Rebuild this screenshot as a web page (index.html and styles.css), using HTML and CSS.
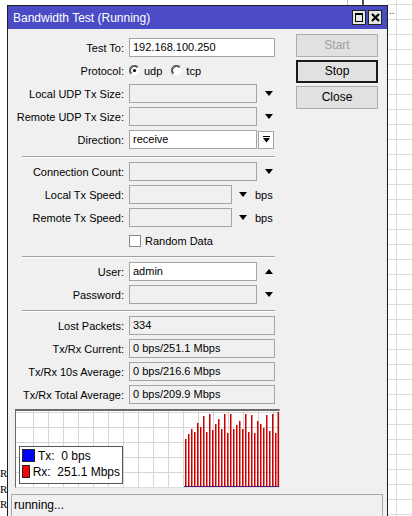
FILE: index.html
```html
<!DOCTYPE html>
<html>

<head>
    <title>Bandwidth Test</title>
    <link rel="stylesheet" href="styles.css">
</head>

<body>
    <div class="desk">
        <div class="desk-left">R<br>R<br>R</div>

        <div class="win-col">
            <div class="desk-top"><span class="desk-scroll"></span></div>

            <div class="window">
                <div class="title-bar">
                    <span class="title">Bandwidth Test (Running)</span>
                    <span class="tb-btn"><span class="max-icon"></span></span>
                    <span class="tb-btn">
                        <svg width="9" height="9" viewBox="0 0 9 9">
                            <path d="M1 1 L8 8 M8 1 L1 8" stroke="#000" stroke-width="2.2" />
                        </svg>
                    </span>
                </div>

                <div class="main">
                    <div class="form">
                        <div class="row">
                            <label>Test To:</label>
                            <div class="value"><span class="field wide">192.168.100.250</span></div>
                        </div>
                        <div class="row">
                            <label>Protocol:</label>
                            <div class="value">
                                <span class="radio">
                                    <svg width="11" height="11" viewBox="0 0 11 11">
                                        <circle cx="5.5" cy="5.5" r="5" fill="#fff" />
                                        <path d="M1.9 9.1 A5 5 0 0 1 9.1 1.9" fill="none" stroke="#6a6a6a" stroke-width="1.2" />
                                        <path d="M2.6 8.4 A4 4 0 0 1 8.4 2.6" fill="none" stroke="#222" stroke-width="1" />
                                        <circle cx="5.5" cy="5.5" r="1.6" fill="#000" />
                                    </svg>
                                    udp
                                </span>
                                <span class="radio">
                                    <svg width="11" height="11" viewBox="0 0 11 11">
                                        <circle cx="5.5" cy="5.5" r="5" fill="#fff" />
                                        <path d="M1.9 9.1 A5 5 0 0 1 9.1 1.9" fill="none" stroke="#6a6a6a" stroke-width="1.2" />
                                        <path d="M2.6 8.4 A4 4 0 0 1 8.4 2.6" fill="none" stroke="#222" stroke-width="1" />
                                    </svg>
                                    tcp
                                </span>
                            </div>
                        </div>
                        <div class="row">
                            <label>Local UDP Tx Size:</label>
                            <div class="value"><span class="field short gray"></span><span class="arrow-down"></span></div>
                        </div>
                        <div class="row">
                            <label>Remote UDP Tx Size:</label>
                            <div class="value"><span class="field short gray"></span><span class="arrow-down"></span></div>
                        </div>
                        <div class="row">
                            <label>Direction:</label>
                            <div class="value">
                                <span class="field short">receive</span>
                                <span class="dd-btn">
                                    <svg width="7" height="7" viewBox="0 0 7 7">
                                        <path d="M0 0.5 H7" stroke="#000" stroke-width="1" />
                                        <path d="M0 2 H7 L3.5 6.5 Z" fill="#000" />
                                    </svg>
                                </span>
                            </div>
                        </div>

                        <div class="sep first"></div>

                        <div class="row">
                            <label>Connection Count:</label>
                            <div class="value"><span class="field short gray"></span><span class="arrow-down"></span></div>
                        </div>
                        <div class="row">
                            <label>Local Tx Speed:</label>
                            <div class="value"><span class="field speed gray"></span><span class="arrow-down near"></span><span class="unit">bps</span></div>
                        </div>
                        <div class="row">
                            <label>Remote Tx Speed:</label>
                            <div class="value"><span class="field speed gray"></span><span class="arrow-down near"></span><span class="unit">bps</span></div>
                        </div>
                        <div class="row">
                            <label></label>
                            <div class="value"><span class="check"></span>Random Data</div>
                        </div>

                        <div class="sep"></div>

                        <div class="row">
                            <label>User:</label>
                            <div class="value"><span class="field short">admin</span><span class="arrow-up"></span></div>
                        </div>
                        <div class="row">
                            <label>Password:</label>
                            <div class="value"><span class="field short gray"></span><span class="arrow-down"></span></div>
                        </div>

                        <div class="sep"></div>

                        <div class="row">
                            <label>Lost Packets:</label>
                            <div class="value"><span class="field wide gray">334</span></div>
                        </div>
                        <div class="row">
                            <label>Tx/Rx Current:</label>
                            <div class="value"><span class="field wide gray">0 bps/251.1 Mbps</span></div>
                        </div>
                        <div class="row">
                            <label>Tx/Rx 10s Average:</label>
                            <div class="value"><span class="field wide gray">0 bps/216.6 Mbps</span></div>
                        </div>
                        <div class="row">
                            <label>Tx/Rx Total Average:</label>
                            <div class="value"><span class="field wide gray">0 bps/209.9 Mbps</span></div>
                        </div>
                    </div>

                    <div class="buttons">
                        <div class="btn disabled">Start</div>
                        <div class="btn default">Stop</div>
                        <div class="btn">Close</div>
                    </div>
                </div>

                <!-- traffic graph: grid, rx bars, tx baseline -->
                <div class="graph">
                    <svg width="263" height="76" viewBox="0 0 263 76">
                        <g stroke="#d6d6d6" stroke-width="1">
                            <path d="M17.5 0 V76 M32.5 0 V76 M47.5 0 V76 M62.5 0 V76 M77.5 0 V76 M92.5 0 V76 M107.5 0 V76 M122.5 0 V76 M137.5 0 V76 M152.5 0 V76 M167.5 0 V76 M182.5 0 V76 M197.5 0 V76 M212.5 0 V76 M227.5 0 V76 M242.5 0 V76 M257.5 0 V76" />
                            <path d="M0 1.5 H263 M0 16.5 H263 M0 31.5 H263 M0 46.5 H263 M0 61.5 H263" />
                        </g>
                        <g fill="#cc0000">
                            <rect x="169" y="28" width="1.5" height="48" />
                            <rect x="172" y="23" width="1.5" height="53" />
                            <rect x="175" y="18" width="1.5" height="58" />
                            <rect x="178" y="21" width="1.5" height="55" />
                            <rect x="181" y="12" width="1.5" height="64" />
                            <rect x="184" y="16" width="1.5" height="60" />
                            <rect x="187" y="5" width="1.5" height="71" />
                            <rect x="190" y="21" width="1.5" height="55" />
                            <rect x="193" y="3" width="1.5" height="73" />
                            <rect x="196" y="19" width="1.5" height="57" />
                            <rect x="199" y="13" width="1.5" height="63" />
                            <rect x="202" y="8" width="1.5" height="68" />
                            <rect x="205" y="18" width="1.5" height="58" />
                            <rect x="208" y="3" width="1.5" height="73" />
                            <rect x="211" y="22" width="1.5" height="54" />
                            <rect x="214" y="3" width="1.5" height="73" />
                            <rect x="217" y="18" width="1.5" height="58" />
                            <rect x="220" y="14" width="1.5" height="62" />
                            <rect x="223" y="10" width="1.5" height="66" />
                            <rect x="226" y="18" width="1.5" height="58" />
                            <rect x="229" y="3" width="1.5" height="73" />
                            <rect x="232" y="21" width="1.5" height="55" />
                            <rect x="235" y="4" width="1.5" height="72" />
                            <rect x="238" y="22" width="1.5" height="54" />
                            <rect x="241" y="10" width="1.5" height="66" />
                            <rect x="244" y="13" width="1.5" height="63" />
                            <rect x="247" y="17" width="1.5" height="59" />
                            <rect x="250" y="4" width="1.5" height="72" />
                            <rect x="253" y="20" width="1.5" height="56" />
                            <rect x="256" y="3" width="1.5" height="73" />
                            <rect x="259" y="22" width="1.5" height="54" />
                            <rect x="261.5" y="1" width="1.5" height="75" />
                        </g>
                        <path d="M168 75.5 H263" stroke="#5a1070" stroke-width="1" />
                    </svg>
                    <div class="legend">
                        <div class="legend-row"><span class="swatch tx"></span>Tx:  0 bps</div>
                        <div class="legend-row"><span class="swatch rx"></span>Rx:  251.1 Mbps</div>
                    </div>
                </div>

                <div class="status">running...</div>
            </div>
        </div>

        <div class="desk-right"><span class="dots">..</span></div>
    </div>
</body>

</html>
```

FILE: styles.css
```css
body {
    margin: 0;
    font-family: "Liberation Sans", Arial, sans-serif;
    font-size: 11px;
    color: #000;
    background-color: #fff;
    overflow: hidden;
}

/* desktop behind the window */
.desk {
    display: flex;
    height: 516px;
    overflow: hidden;
}

.desk-left {
    width: 7px;
    flex: none;
    padding-top: 466px;
    font-family: "Liberation Serif", serif;
    font-size: 11px;
    line-height: 15.5px;
}

.win-col {
    width: 381px;
    flex: none;
}

.desk-top {
    height: 5px;
    position: relative;
}

.desk-scroll {
    position: absolute;
    left: 340px;
    top: 0;
    width: 14px;
    height: 5px;
    border-left: 1px solid #c0c0c0;
    border-right: 2px solid #555;
}

.desk-right {
    flex: 1;
    background-image:
        linear-gradient(to right, transparent 8px, #dcdcdc 8px, #dcdcdc 9px, transparent 9px),
        repeating-linear-gradient(to bottom, transparent 0, transparent 4px, #dcdcdc 4px, #dcdcdc 5px, transparent 5px, transparent 15px);
}

.dots {
    display: block;
    margin: 6px 0 0 1px;
    font-size: 10px;
    line-height: 10px;
    color: #333;
}

/* window frame */
.window {
    border: 1px solid #1e1e1e;
    border-bottom: none;
    background-color: #f0f0f0;
    height: 600px;
}

.title-bar {
    height: 23px;
    background-color: #4b4bc6;
    display: flex;
    align-items: center;
    padding: 0 5px;
    color: #fff;
}

.title {
    flex: 1;
    font-size: 12px;
}

.tb-btn {
    width: 12px;
    height: 13px;
    border: 1px solid #222;
    background-color: #e6e6e6;
    margin-left: 2px;
    display: flex;
    align-items: center;
    justify-content: center;
}

.max-icon {
    width: 6px;
    height: 6px;
    border: 1px solid #000;
    border-top-width: 2px;
}

/* form + buttons */
.main {
    display: flex;
}

.form {
    width: 272px;
    padding-top: 9px;
    display: flex;
    flex-direction: column;
    gap: 4px;
}

.row {
    display: grid;
    grid-template-columns: 116px auto;
    column-gap: 5px;
    align-items: center;
    height: 19px;
}

.row label {
    text-align: right;
    white-space: nowrap;
}

.value {
    display: flex;
    align-items: center;
    height: 19px;
}

.field {
    box-sizing: border-box;
    height: 19px;
    border: 1px solid #a5a5a5;
    background-color: #fff;
    padding: 0 3px;
    line-height: 17px;
}

.field.gray {
    background-color: #f0f0f0;
}

.field.wide {
    width: 146px;
}

.field.short {
    width: 128px;
}

.field.speed {
    width: 103px;
}

.arrow-down,
.arrow-up {
    width: 0;
    height: 0;
    margin-left: 8px;
    border-left: 4px solid transparent;
    border-right: 4px solid transparent;
}

.arrow-down {
    border-top: 5px solid #000;
}

.arrow-up {
    border-bottom: 5px solid #000;
}

.arrow-down.near {
    margin-left: 7px;
}

.unit {
    margin-left: 8px;
}

.dd-btn {
    box-sizing: border-box;
    width: 16px;
    height: 18px;
    margin-left: 1px;
    border: 1px solid #a5a5a5;
    background-color: #fff;
    display: flex;
    align-items: center;
    justify-content: center;
}

.radio {
    display: inline-flex;
    align-items: center;
    gap: 4px;
    margin-right: 9px;
}

.check {
    box-sizing: border-box;
    width: 12px;
    height: 12px;
    border: 1px solid #8a8a8a;
    background-color: #fff;
    margin-right: 4px;
}

.sep {
    margin: 2px 0 0 14px;
    width: 253px;
    height: 0;
    border-top: 1px solid #a0a0a0;
    border-bottom: 1px solid #fff;
}

.sep.first {
    margin-top: 3px;
}

.buttons {
    margin: 5px 0 0 16px;
    width: 82px;
    display: flex;
    flex-direction: column;
    gap: 3px;
}

.btn {
    box-sizing: border-box;
    height: 23px;
    border: 1px solid #adadad;
    background-color: #e1e1e1;
    text-align: center;
    line-height: 21px;
    font-size: 12px;
}

.btn.disabled {
    color: #a0a0a0;
}

.btn.default {
    border: 2px solid #1a1a1a;
    line-height: 19px;
}

/* traffic graph */
.graph {
    position: relative;
    box-sizing: border-box;
    width: 265px;
    height: 79px;
    margin: 5px 0 0 7px;
    border-top: 2px solid #6a6a6a;
    border-left: 1px solid #6a6a6a;
    border-right: 1px solid #dcdcdc;
    border-bottom: 1px solid #dcdcdc;
    background-color: #fff;
}

.graph svg {
    display: block;
}

.legend {
    position: absolute;
    left: 3px;
    top: 35px;
    box-sizing: border-box;
    width: 104px;
    height: 38px;
    padding: 2px;
    border: 1px solid #555;
    background-color: #fff;
    display: flex;
    flex-direction: column;
    gap: 3px;
    font-size: 12px;
}

.legend-row {
    display: flex;
    align-items: center;
    height: 13px;
    white-space: pre;
}

.swatch {
    box-sizing: border-box;
    width: 13px;
    height: 13px;
    border: 1px solid #222;
    margin-right: 3px;
}

.swatch.tx {
    background-color: #0000ff;
}

.swatch.rx {
    background-color: #ff0000;
}

.status {
    box-sizing: border-box;
    width: 372px;
    height: 24px;
    margin: 6px 0 0 3px;
    padding-left: 2px;
    border: 1px solid #a8a8a8;
    line-height: 21px;
    font-size: 12px;
}
```
